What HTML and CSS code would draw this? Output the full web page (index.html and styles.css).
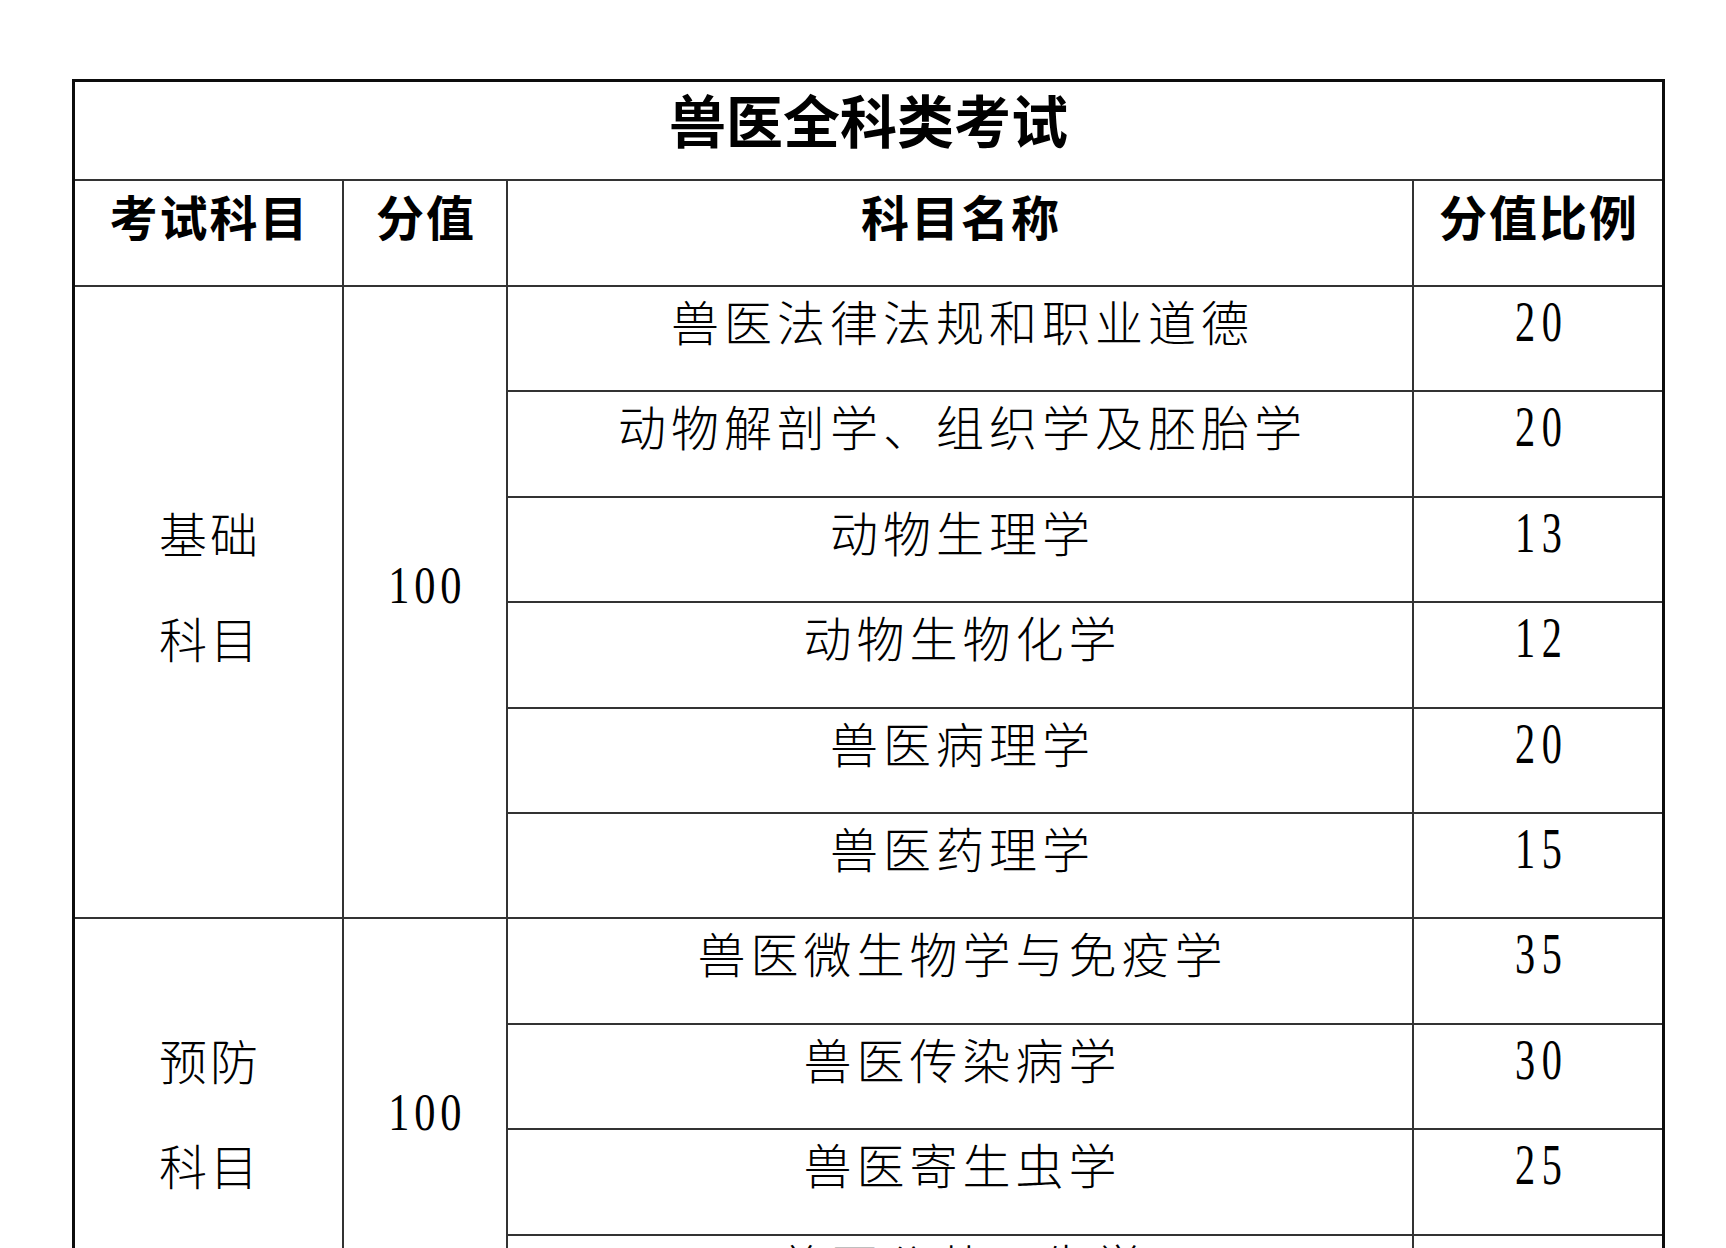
FILE: index.html
```html
<!DOCTYPE html>
<html lang="zh-CN">
<head>
<meta charset="utf-8">
<title>兽医全科类考试</title>
<link rel="stylesheet" href="styles.css">
</head>
<body>
<div class="sheet">
  <div class="cell title">兽医全科类考试</div>

  <div class="cell head">考试科目</div>
  <div class="cell head">分值</div>
  <div class="cell head">科目名称</div>
  <div class="cell head last">分值比例</div>

  <div class="cell group g1">基础<br>科目</div>
  <div class="cell group total g1"><span class="num big">100</span></div>
  <div class="cell name">兽医法律法规和职业道德</div>
  <div class="cell ratio last"><span class="num">20</span></div>
  <div class="cell name">动物解剖学、组织学及胚胎学</div>
  <div class="cell ratio last"><span class="num">20</span></div>
  <div class="cell name">动物生理学</div>
  <div class="cell ratio last"><span class="num">13</span></div>
  <div class="cell name">动物生物化学</div>
  <div class="cell ratio last"><span class="num">12</span></div>
  <div class="cell name">兽医病理学</div>
  <div class="cell ratio last"><span class="num">20</span></div>
  <div class="cell name">兽医药理学</div>
  <div class="cell ratio last"><span class="num">15</span></div>

  <div class="cell group g2">预防<br>科目</div>
  <div class="cell group total g2"><span class="num big">100</span></div>
  <div class="cell name">兽医微生物学与免疫学</div>
  <div class="cell ratio last"><span class="num">35</span></div>
  <div class="cell name">兽医传染病学</div>
  <div class="cell ratio last"><span class="num">30</span></div>
  <div class="cell name">兽医寄生虫学</div>
  <div class="cell ratio last"><span class="num">25</span></div>
  <div class="cell name tail">兽医公共卫生学</div>
  <div class="cell ratio last"><span class="num">10</span></div>
</div>
</body>
</html>
```
FILE: styles.css
```css
html {
  overflow: hidden;
  background: #fff;
}

body {
  margin: 0;
  background: #fff;
  color: #000;
  font-family: "Noto Sans CJK SC", sans-serif;
}

.sheet {
  display: grid;
  grid-template-columns: 269px 164px 906px 248px;
  grid-template-rows: 99px 106px repeat(10, 105.4px);
  margin: 79px 0 0 72px;
  width: max-content;
  border: 3px solid #0d0d0d;
}

.cell {
  box-sizing: border-box;
  display: flex;
  justify-content: center;
  align-items: flex-start;
  border-right: 2px solid #333;
  border-bottom: 2px solid #333;
  white-space: nowrap;
}

.cell.last {
  border-right: none;
}

.title {
  grid-column: 1 / 5;
  border-right: none;
  font-size: 57px;
  line-height: 57px;
  font-weight: 700;
  padding-top: 8px;
}

.head {
  font-size: 48px;
  line-height: 48px;
  font-weight: 700;
  letter-spacing: 2px;
  padding-left: 2px;
  padding-top: 10px;
}

.name {
  font-size: 48px;
  line-height: 48px;
  font-weight: 300;
  letter-spacing: 5px;
  padding-left: 5px;
  padding-top: 9px;
}

.ratio {
  padding-top: 7px;
}

.cell.tail {
  padding-top: 4px;
}

.group {
  align-items: center;
  text-align: center;
  font-size: 48px;
  line-height: 105px;
  font-weight: 300;
  letter-spacing: 3px;
  padding-left: 3px;
  padding-bottom: 35px;
}

.group.total {
  padding-left: 0;
  padding-bottom: 33px;
}

.g1 {
  grid-row: 3 / 9;
}

.g2 {
  grid-row: 9 / 13;
}

.num {
  display: inline-block;
  font-family: "Liberation Serif", serif;
  font-size: 56px;
  line-height: 56px;
  letter-spacing: 9px;
  padding-left: 9px;
  transform: scaleX(0.72);
}

.num.big {
  font-size: 53px;
  line-height: 53px;
  letter-spacing: 6px;
  padding-left: 6px;
  transform: scaleX(0.8);
}
```
